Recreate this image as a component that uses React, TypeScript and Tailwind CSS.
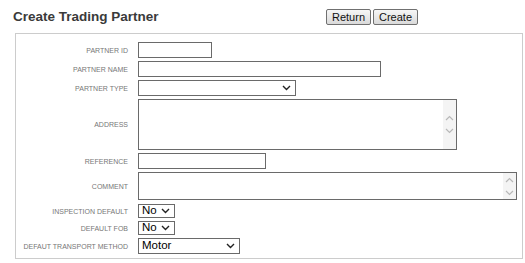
import React from 'react';

const font = { fontFamily: '"Liberation Sans", Arial, sans-serif' };

const Chevron = ({ className = '' }: { className?: string }) => (
  <svg width="9" height="6" viewBox="0 0 9 6" className={className}>
    <path d="M1 1 L4.5 4.5 L8 1" fill="none" stroke="#222" strokeWidth="1.4" />
  </svg>
);

const Scroll = () => (
  <div className="absolute right-0 top-0 bottom-0 w-[13px] bg-[#f4f4f4] flex flex-col items-center justify-center gap-[7px]">
    <svg width="9" height="6" viewBox="0 0 9 6">
      <path d="M1 5 L4.5 1.5 L8 5" fill="none" stroke="#b8b8b8" strokeWidth="1.2" />
    </svg>
    <svg width="9" height="6" viewBox="0 0 9 6">
      <path d="M1 1 L4.5 4.5 L8 1" fill="none" stroke="#b8b8b8" strokeWidth="1.2" />
    </svg>
  </div>
);

const Label = ({ text, className = '' }: { text: string; className?: string }) => (
  <div className={`text-[7px] leading-none text-[#777] text-right uppercase flex items-center justify-end ${className}`}>
    {text}
  </div>
);

const Box = ({ w, h, children }: { w: string; h: string; children?: React.ReactNode }) => (
  <div className={`relative border border-[#6a6a6a] bg-white ${w} ${h}`}>{children}</div>
);

const Select = ({ w, h, value }: { w: string; h: string; value?: string }) => (
  <div className={`relative border border-[#6a6a6a] bg-white flex items-center pl-[3px] text-[11.5px] text-black ${w} ${h}`}>
    <span className="leading-none">{value}</span>
    <Chevron className="absolute right-[4px] top-1/2 -translate-y-1/2" />
  </div>
);

export default function App() {
  return (
    <div className="w-[525px] h-[263px] bg-white overflow-hidden" style={font}>
      <div className="flex items-center pt-[9px] h-[25px]">
        <h1 className="w-[326px] pl-[13px] text-[13.5px] font-bold text-[#3a3a3a]">Create Trading Partner</h1>
        <div className="flex gap-[2px]">
          <button className="w-[45px] h-[16px] border border-[#707070] rounded-[2px] bg-gradient-to-b from-[#f6f6f6] to-[#dadada] text-[11px] leading-none text-[#111]">
            Return
          </button>
          <button className="w-[45px] h-[16px] border border-[#707070] rounded-[2px] bg-gradient-to-b from-[#f6f6f6] to-[#dadada] text-[11px] leading-none text-[#111]">
            Create
          </button>
        </div>
      </div>

      <div className="ml-[15px] mt-[8px] w-[508px] h-[226px] border border-[#cccccc] pt-[8px]">
        <div className="grid grid-cols-[112px_1fr] gap-x-[10px] gap-y-[3px]">
          <Label text="Partner ID" />
          <Box w="w-[74px]" h="h-[16px]" />

          <Label text="Partner Name" />
          <Box w="w-[243px]" h="h-[16px]" />

          <Label text="Partner Type" />
          <Select w="w-[158px]" h="h-[16px]" />

          <Label text="Address" />
          <Box w="w-[319px]" h="h-[51px]">
            <Scroll />
          </Box>

          <Label text="Reference" />
          <Box w="w-[128px]" h="h-[16px]" />

          <Label text="Comment" />
          <Box w="w-[379px]" h="h-[28px]">
            <Scroll />
          </Box>

          <Label text="Inspection Default" className="mt-[1px]" />
          <div className="mt-[1px]">
            <Select w="w-[37px]" h="h-[14px]" value="No" />
          </div>

          <Label text="Default FOB" />
          <Select w="w-[37px]" h="h-[14px]" value="No" />

          <Label text="Defaut Transport Method" />
          <Select w="w-[102px]" h="h-[16px]" value="Motor" />
        </div>
      </div>
    </div>
  );
}
